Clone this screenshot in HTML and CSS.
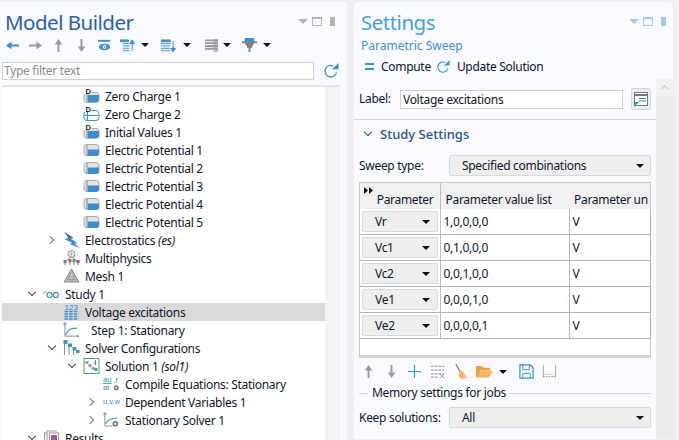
FILE: index.html
```html
<!DOCTYPE html>
<html>
  <head>
    <meta charset="UTF-8">
    <title>Model Builder</title>
    <link rel="stylesheet" href="styles.css">
  </head>
  <body>
    <svg class="defs" width="0" height="0">
      <symbol id="cyl" viewBox="0 0 16 16"><rect x=".5" y="2.5" width="15" height="11" rx="3" fill="#e4e4e4" stroke="#a8a8a8"/><path d="M4 7.500h11.500v3.500a3 3 0 0 1-3 3H4z" fill="#3a8ed0"/><path d="M3.500 3v11" stroke="#a8a8a8" stroke-width="1.500"/></symbol>
      <symbol id="cyl-d" viewBox="0 0 16 16"><rect x=".5" y="4.5" width="15" height="10" rx="3" fill="#e4e4e4" stroke="#a8a8a8"/><path d="M4 7h11.500v4a3 3 0 0 1-3 3H4z" fill="#3a8ed0"/><path d="M3.500 5v9" stroke="#a8a8a8" stroke-width="1.500"/><rect x="0" y="0" width="8" height="6" fill="#fff"/><text x="2" y="6" class="tiny">D</text></symbol>
      <symbol id="cyl-o" viewBox="0 0 16 16"><rect x=".5" y="4.5" width="15" height="10" rx="3" fill="#fff" stroke="#3a8ed0"/><path d="M1 9.500h14" stroke="#3a8ed0"/><path d="M4 5v9" stroke="#3a8ed0"/><rect x="0" y="0" width="8" height="6" fill="#fff"/><text x="2" y="6" class="tiny">D</text></symbol>
      <symbol id="bolt" viewBox="0 0 16 16"><path d="M1 0l9 6-3 .5 7 4.500-3 .5 5 4.500-10-4 2.500-1L1 7l4-1z" fill="#3a8ed0"/><path d="M1 0l9 6-3 .5-2-.5z" fill="#56697c"/></symbol>
      <symbol id="multi" viewBox="0 0 16 16"><circle cx="8" cy="4" r="3.500" fill="none" stroke="#9a9a9a"/><path d="M5 2l6 4M11 2L5 6M8 0v8" stroke="#9a9a9a" stroke-width=".6"/><path d="M2 12l5-5h2l5 5" fill="none" stroke="#888"/><rect x="0" y="10" width="3" height="3" fill="#3a8ed0"/><rect x="13" y="10" width="3" height="3" fill="#d6359c"/><rect x="5" y="9" width="3" height="3" fill="#e2542e"/><rect x="9" y="9" width="3" height="3" fill="#46a85a"/><path d="M1.500 13v2M6.500 12v3M10.500 12v3M14.500 13v2" stroke="#777"/></symbol>
      <symbol id="mesh" viewBox="0 0 16 16"><path d="M8 1l7.500 13H.5z" fill="#c4c4c4" stroke="#8c8c8c"/><path d="M5 8.500h6M3 11.500h10M8 1L4 14M8 1l4 13M5 8.500L8 14l3-5.500" stroke="#8c8c8c" stroke-width=".6" fill="none"/></symbol>
      <symbol id="study" viewBox="0 0 18 16"><path d="M0 8c1-3 3-3 4-1" fill="none" stroke="#2f9bb5"/><circle cx="7" cy="9" r="2.700" fill="none" stroke="#2f9bb5" stroke-width="1.200"/><circle cx="13.500" cy="9" r="2.700" fill="none" stroke="#4f7f96" stroke-width="1.200"/></symbol>
      <symbol id="sweep" viewBox="0 0 16 16"><text x="1" y="6" class="tiny blue mid">123</text><path d="M1 7.500h14M1 10h14M1 12.500h14M1 15h14" stroke="#3a8ed0" stroke-width="1.500" stroke-dasharray="3.600 1"/></symbol>
      <symbol id="step" viewBox="0 0 18 16"><path d="M2 0l1.500 2h-3zM2 1v13.500h15" fill="none" stroke="#8c8c8c"/><path d="M15 13l2 1.500-2 1.500" fill="#8c8c8c"/><path d="M3 13c2-6 6-7 12-7" fill="none" stroke="#2f9bb5" stroke-width="1.200"/></symbol>
      <symbol id="solver" viewBox="0 0 16 16"><path d="M1 2v13M5.500 6v9M10 10v5" stroke="#8c8c8c"/><rect x="0" y="0" width="4" height="4" fill="#2f9bb5"/><rect x="4.500" y="3.500" width="4" height="3.500" fill="#2f9bb5"/><rect x="9" y="7" width="4" height="3.500" fill="#2f9bb5"/><rect x="12.500" y="10" width="3.500" height="3" fill="#2f9bb5"/></symbol>
      <symbol id="solution" viewBox="0 0 16 16"><rect x=".5" y=".5" width="15" height="15" fill="#fff" stroke="#4fa556"/><rect x="2" y="3" width="3" height="3" fill="#9a9a9a"/><rect x="5" y="6" width="3" height="3" fill="#9a9a9a"/><rect x="8" y="9" width="3" height="3" fill="#9a9a9a"/><rect x="11" y="10" width="3" height="3" fill="#2f9bb5"/><path d="M12 2v5M10 5h3" stroke="#2f9bb5"/></symbol>
      <symbol id="compile" viewBox="0 0 18 16"><text x="0" y="6" class="tiny blue mid">au</text><path d="M0 7.500h9" stroke="#2f9bb5"/><text x="0" y="14" class="tiny blue mid">at</text><text x="11" y="7" class="tiny blue mid">.f</text><circle cx="14" cy="12" r="2.700" fill="#777"/><circle cx="14" cy="12" r="1" fill="#fff"/></symbol>
      <symbol id="depvar" viewBox="0 0 18 16"><text x="0" y="10" class="tiny blue mid">u,v,w</text></symbol>
      <symbol id="stat" viewBox="0 0 18 16"><path d="M2 0l1.500 2h-3zM2 1v13.500h8" fill="none" stroke="#8c8c8c"/><path d="M3 12c2-5 6-6 12-6" fill="none" stroke="#2f9bb5" stroke-width="1.200"/><circle cx="13" cy="12" r="3" fill="#777"/><circle cx="13" cy="12" r="1.200" fill="#fff"/></symbol>
      <symbol id="results" viewBox="0 0 16 16"><rect x="1" y="3" width="9" height="13" fill="#fff" stroke="#999"/><rect x="3.500" y="1" width="9" height="13" fill="#fff" stroke="#999"/><rect x="6" y="3" width="9" height="13" fill="#fff" stroke="#999"/><rect x="7.500" y="5" width="6" height="9" fill="#b04f9c"/></symbol>
      <symbol id="up" viewBox="0 0 16 16"><path d="M8 1l4 6H9v8H7V7H4z" fill="#9a9a9a"/></symbol>
      <symbol id="down" viewBox="0 0 16 16"><path d="M8 15l4-6H9V1H7v8H4z" fill="#9a9a9a"/></symbol>
      <symbol id="refresh" viewBox="0 0 16 16"><path d="M13.500 9.500A5.800 5.800 0 1 1 10.500 3" fill="none" stroke="#3a8ed0" stroke-width="1.300"/><path d="M9 6.500l6.500-.5V0z" fill="#3a8ed0"/></symbol>
    </svg>

    <section class="panel builder">
      <header class="panel-head">
        <h1 class="panel-title dark">Model Builder</h1>
        <div class="view-btns grey">
          <span class="tri"></span><span class="box"></span><span class="pin"></span>
        </div>
      </header>
      <div class="toolbar">
        <svg class="tb" viewBox="0 0 16 16"><path d="M1 8l6-4v3h8v2H7v3z" fill="#3a8ed0"/></svg>
        <svg class="tb" viewBox="0 0 16 16"><path d="M15 8L9 4v3H1v2h8v3z" fill="#9a9a9a"/></svg>
        <svg class="tb"><use href="#up"/></svg>
        <svg class="tb"><use href="#down"/></svg>
        <svg class="tb" viewBox="0 0 16 16"><path d="M1 2h13v2H1z" fill="#3a8ed0"/><ellipse cx="8" cy="9.500" rx="6" ry="3.500" fill="#3a8ed0"/><circle cx="8" cy="9.500" r="2" fill="#fff"/><circle cx="8" cy="9.500" r="1" fill="#3a8ed0"/></svg>
        <svg class="tb list-up" viewBox="0 0 16 16"><path d="M0 2h9v2H0zM3 6h7M3 8.500h7M3 11h7M3 13.500h7" stroke="#3a8ed0" fill="#3a8ed0"/><path d="M13 14V4M10.500 6L13 2l2.500 4z" stroke="#3a8ed0" fill="#3a8ed0"/></svg><span class="drop"></span>
        <svg class="tb list-down" viewBox="0 0 16 16"><path d="M0 2h10v2H0zM0 6h10M0 8.500h10M0 11h10M0 13.500h10" stroke="#3a8ed0" fill="#3a8ed0"/><path d="M13 3v10M10.500 11l2.500 4 2.500-4z" stroke="#3a8ed0" fill="#3a8ed0"/></svg><span class="drop"></span>
        <svg class="tb grid" viewBox="0 0 16 16"><path d="M1 2.500h14M1 5.500h14M1 8.500h14M1 11.500h14" stroke="#9a9a9a" stroke-width="2"/><path d="M10 1h5v14h-5z" fill="#9a9a9a" opacity=".6"/></svg><span class="drop"></span>
        <svg class="tb funnel" viewBox="0 0 16 16"><path d="M0 4.500h16" stroke="#808080" stroke-width="2"/><path d="M3 0h10v4H3z" fill="#3a8ed0"/><path d="M3 5h10l-3 6H6z" fill="#808080"/><path d="M7 11h2v4H7z" fill="#3a8ed0"/></svg><span class="drop"></span>
      </div>
      <div class="filter-row">
        <input class="filter" type="text" placeholder="Type filter text">
        <svg class="refresh"><use href="#refresh"/></svg>
      </div>
      <div class="tree-box">
        <ul class="tree">
          <li class="node d3"><i class="chev"></i><svg class="ico"><use href="#cyl-d"/></svg><span>Zero Charge 1</span></li>
          <li class="node d3"><i class="chev"></i><svg class="ico"><use href="#cyl-o"/></svg><span>Zero Charge 2</span></li>
          <li class="node d3"><i class="chev"></i><svg class="ico"><use href="#cyl-d"/></svg><span>Initial Values 1</span></li>
          <li class="node d3"><i class="chev"></i><svg class="ico"><use href="#cyl"/></svg><span>Electric Potential 1</span></li>
          <li class="node d3"><i class="chev"></i><svg class="ico"><use href="#cyl"/></svg><span>Electric Potential 2</span></li>
          <li class="node d3"><i class="chev"></i><svg class="ico"><use href="#cyl"/></svg><span>Electric Potential 3</span></li>
          <li class="node d3"><i class="chev"></i><svg class="ico"><use href="#cyl"/></svg><span>Electric Potential 4</span></li>
          <li class="node d3"><i class="chev"></i><svg class="ico"><use href="#cyl"/></svg><span>Electric Potential 5</span></li>
          <li class="node d2"><i class="chev closed"></i><svg class="ico"><use href="#bolt"/></svg><span>Electrostatics <em>(es)</em></span></li>
          <li class="node d2"><i class="chev"></i><svg class="ico"><use href="#multi"/></svg><span>Multiphysics</span></li>
          <li class="node d2"><i class="chev"></i><svg class="ico"><use href="#mesh"/></svg><span>Mesh 1</span></li>
          <li class="node d1"><i class="chev open"></i><svg class="ico"><use href="#study"/></svg><span>Study 1</span></li>
          <li class="node d2 selected"><i class="chev"></i><svg class="ico"><use href="#sweep"/></svg><span>Voltage excitations</span></li>
          <li class="node d2"><i class="chev"></i><svg class="ico"><use href="#step"/></svg><span class="shifted">Step 1: Stationary</span></li>
          <li class="node d2"><i class="chev open"></i><svg class="ico"><use href="#solver"/></svg><span>Solver Configurations</span></li>
          <li class="node d3"><i class="chev open"></i><svg class="ico"><use href="#solution"/></svg><span>Solution 1 <em>(sol1)</em></span></li>
          <li class="node d4"><i class="chev"></i><svg class="ico"><use href="#compile"/></svg><span>Compile Equations: Stationary</span></li>
          <li class="node d4"><i class="chev closed"></i><svg class="ico"><use href="#depvar"/></svg><span>Dependent Variables 1</span></li>
          <li class="node d4"><i class="chev closed"></i><svg class="ico"><use href="#stat"/></svg><span>Stationary Solver 1</span></li>
          <li class="node d1"><i class="chev open"></i><svg class="ico"><use href="#results"/></svg><span>Results</span></li>
        </ul>
        <div class="tree-scroll"></div>
      </div>
    </section>

    <section class="panel settings">
      <header class="panel-head">
        <h1 class="panel-title">Settings</h1>
        <div class="view-btns">
          <span class="tri"></span><span class="box"></span><span class="pin"></span>
        </div>
      </header>
      <div class="subtitle">Parametric Sweep</div>
      <div class="actions">
        <span class="action"><span class="equals"></span>Compute</span>
        <span class="action"><svg class="action-ico"><use href="#refresh"/></svg>Update Solution</span>
      </div>
      <div class="settings-body">
        <div class="form">
          <div class="label-row">
            <label class="label-name" for="label">Label:</label>
            <input id="label" class="label-input" type="text" value="Voltage excitations">
            <button class="note-btn" type="button">
              <svg viewBox="0 0 16 16" width="16" height="16"><rect x="1.500" y="1.500" width="13" height="13" fill="#fff" stroke="#777"/><path d="M1 4h14" stroke="#777" stroke-width="2"/><path d="M6 7.500h7M6 10h7" stroke="#23a27f"/><path d="M1 16v-5h5z" fill="#23a27f"/></svg>
            </button>
          </div>
          <h2 class="section-head"><i class="chev open navy"></i>Study Settings</h2>
          <div class="field">
            <span class="field-name">Sweep type:</span>
            <div class="select">Specified combinations<span class="drop"></span></div>
          </div>
          <div class="table-wrap">
            <table class="params">
              <thead>
                <tr>
                  <th class="c-param">
                    <svg class="ff" viewBox="0 0 9 7"><path d="M0 0l4 3.500L0 7zM5 0l4 3.500L5 7z" fill="#111"/></svg>Parameter
                  </th>
                  <th class="c-list">Parameter value list</th>
                  <th class="c-unit">Parameter un</th>
                </tr>
              </thead>
              <tbody>
                <tr><td class="c-param"><div class="combo">Vr<span class="drop"></span></div></td><td>1,0,0,0,0</td><td>V</td></tr>
                <tr><td class="c-param"><div class="combo">Vc1<span class="drop"></span></div></td><td>0,1,0,0,0</td><td>V</td></tr>
                <tr><td class="c-param"><div class="combo">Vc2<span class="drop"></span></div></td><td>0,0,1,0,0</td><td>V</td></tr>
                <tr><td class="c-param"><div class="combo">Ve1<span class="drop"></span></div></td><td>0,0,0,1,0</td><td>V</td></tr>
                <tr><td class="c-param"><div class="combo">Ve2<span class="drop"></span></div></td><td>0,0,0,0,1</td><td>V</td></tr>
              </tbody>
            </table>
          </div>
          <div class="table-tools">
            <svg class="tt"><use href="#up"/></svg>
            <svg class="tt"><use href="#down"/></svg>
            <svg class="tt" viewBox="0 0 16 16"><path d="M8 1v14M1 8h14" stroke="#3a8ed0" stroke-width="1.200"/></svg>
            <svg class="tt" viewBox="0 0 16 16"><path d="M1 2.500h14M1 6.500h14M1 10.500h14M1 14h8" stroke="#a0a0a0" stroke-width="1.500" stroke-dasharray="3 1"/><path d="M11 11l4 4M15 11l-4 4" stroke="#8c8c8c"/></svg>
            <svg class="tt" viewBox="0 0 16 16"><path d="M3 0l5 9" stroke="#777" stroke-width="1.200"/><path d="M7 8l3-1 5 8-6 1-3-3z" fill="#f0b56b"/></svg>
            <svg class="tt folder" viewBox="0 0 18 16"><path d="M0 2h6l2 2h7v3H5l-3 7H0z" fill="#eda23e"/><path d="M5 7.500h13l-4 7H1.500z" fill="#f3b562"/></svg><span class="drop"></span>
            <svg class="tt save" viewBox="0 0 16 16"><path d="M1 1h11l3 3v11H1z" fill="none" stroke="#3a8ed0" stroke-width="1.300"/><path d="M4 1v5h7V1M4 15v-5h8v5" fill="none" stroke="#3a8ed0"/></svg>
            <svg class="tt" viewBox="0 0 16 16"><path d="M1.500 1v12M14.500 1v12" stroke="#a8a8a8"/><path d="M1 13.500h14" stroke="#8c8c8c" stroke-dasharray="2 1"/><path d="M3 11h10" stroke="#b8b8b8" stroke-dasharray="2 1"/></svg>
          </div>
          <div class="legend"><span>Memory settings for jobs</span></div>
          <div class="field keep">
            <span class="field-name">Keep solutions:</span>
            <div class="select">All<span class="drop"></span></div>
          </div>
        </div>
        <div class="scrollbar"><span class="scroll-up"></span></div>
      </div>
    </section>
  </body>
</html>
```

FILE: styles.css
```css
html {
  font-family: "Noto Sans", "Open Sans", Arial, sans-serif;
  font-size: 12px;
  letter-spacing: -0.3px;
  color: #10162a;
}
body {
  margin: 0;
  padding: 2px 6px 0 0;
  height: 438px;
  overflow: hidden;
  display: flex;
  gap: 7px;
  background: #efefef;
}
.defs {
  display: none;
}
.tiny {
  font-family: "Liberation Sans", Arial, sans-serif;
  font-size: 7.500px;
  font-weight: bold;
  letter-spacing: 0;
  fill: #222;
}
.tiny.blue {
  font-weight: normal;
  fill: #2f8fb5;
}
.tiny.mid {
  font-size: 8px;
}

/* panels */
.panel {
  background: #f9faff;
  display: flex;
  flex-direction: column;
}
.builder {
  width: 347px;
  flex: none;
}
.settings {
  width: 319px;
  height: 437px;
  flex: none;
  border-radius: 5px 5px 0 0;
}
.panel-head {
  height: 30px;
  display: flex;
  align-items: flex-end;
  justify-content: space-between;
  padding-left: 5px;
}
.settings .panel-head {
  padding-left: 7px;
}
.panel-title {
  margin: 0 0 -5px;
  font-size: 20.5px;
  font-weight: normal;
  letter-spacing: -0.5px;
  line-height: 30px;
  color: #4a9fe0;
}
.panel-title.dark {
  color: #2a5fa8;
}
.view-btns {
  display: flex;
  align-items: center;
  gap: 4px;
  padding: 0 7px 6px 0;
}
.builder .view-btns {
  padding-right: 12px;
}
.tri {
  border: 5px solid transparent;
  border-top: 5px solid #9dc9ee;
  border-bottom: 0;
}
.box {
  width: 8px;
  height: 6px;
  border: 1px solid #9dc9ee;
  border-top-width: 2px;
}
.pin {
  width: 5px;
  height: 9px;
  margin-left: 4px;
  background: #9dc9ee;
}
.grey .tri {
  border-top-color: #b4b4b4;
}
.grey .box {
  border-color: #b4b4b4;
}
.grey .pin {
  background: #b4b4b4;
}

/* model builder toolbar */
.toolbar {
  height: 26px;
  padding-left: 5px;
  display: flex;
  align-items: center;
}
.tb {
  width: 15px;
  height: 15px;
  flex: none;
  margin-right: 8px;
}
.tb.list-up {
  margin-right: 6px;
}
.tb.list-down {
  margin-left: 12px;
  margin-right: 7px;
}
.tb.grid {
  margin-left: 13px;
  margin-right: 4px;
}
.tb.funnel {
  margin-left: 11px;
  margin-right: 6px;
}
.drop {
  display: inline-block;
  width: 0;
  height: 0;
  flex: none;
  border: 4px solid transparent;
  border-top: 4px solid #111;
  border-bottom: 0;
}
.filter-row {
  display: flex;
  align-items: center;
  gap: 9px;
  padding: 0 0 0 2px;
  height: 25px;
  box-sizing: border-box;
}
.filter {
  width: 312px;
  height: 18px;
  box-sizing: border-box;
  border: 1px solid #cfcfcf;
  background: #fff;
  padding: 0 1px;
  font: inherit;
  letter-spacing: inherit;
}
.filter::placeholder {
  color: #8a8a8a;
  opacity: 1;
}
.refresh {
  width: 16px;
  height: 16px;
}

/* tree */
.tree-box {
  flex: 1;
  min-height: 0;
  margin: 2px 7px 0 2px;
  display: flex;
  background: #fff;
  border-top: 2px solid #e4e4e4;
  overflow: hidden;
}
.tree {
  list-style: none;
  margin: 0;
  padding: 0;
  flex: 1;
}
.node {
  height: 18px;
  display: flex;
  align-items: center;
  white-space: nowrap;
}
.d1 { padding-left: 24px; }
.d2 { padding-left: 44px; }
.d3 { padding-left: 64px; }
.d4 { padding-left: 84px; }
.node.selected {
  background: #d9d9d9;
}
.chev {
  width: 14px;
  height: 14px;
  flex: none;
  position: relative;
}
.chev.open::before,
.chev.closed::before {
  content: "";
  position: absolute;
  width: 5px;
  height: 5px;
  border-right: 1.3px solid #444;
  border-bottom: 1.3px solid #444;
}
.chev.open::before {
  left: 3px;
  top: 2px;
  transform: rotate(45deg);
}
.chev.closed::before {
  left: 1px;
  top: 4px;
  border-color: #777;
  transform: rotate(-45deg);
}
.ico {
  width: 17px;
  height: 16px;
  flex: none;
  margin: 0 5px 0 3px;
}
.shifted {
  margin-left: 6px;
}
em {
  font-style: italic;
}
.tree-scroll {
  width: 15px;
  flex: none;
  background: #f2f2f2;
}

/* settings */
.subtitle {
  padding: 5px 0 0 7px;
  line-height: 17px;
  letter-spacing: 0;
  color: #3d8fd6;
}
.actions {
  display: flex;
  gap: 5px;
  padding-left: 11px;
  height: 25px;
  align-items: center;
}
.action {
  display: flex;
  align-items: center;
  gap: 7px;
}
.equals {
  width: 9px;
  height: 3px;
  border-top: 2px solid #2f9bb5;
  border-bottom: 2px solid #2f9bb5;
}
.action-ico {
  width: 14px;
  height: 14px;
}
.settings-body {
  flex: 1;
  min-height: 0;
  display: flex;
}
.form {
  flex: 1;
  min-width: 0;
  display: flex;
  flex-direction: column;
}
.label-row {
  height: 41px;
  flex: none;
  padding: 9px 5px 0 5px;
  box-sizing: border-box;
  display: flex;
  align-items: flex-start;
  border-bottom: 1px solid #d6d6d6;
}
.label-name {
  width: 41px;
  line-height: 22px;
}
.label-input {
  width: 223px;
  height: 19px;
  margin-top: 2px;
  box-sizing: border-box;
  border: 1px solid #cfcfcf;
  background: #fff;
  padding: 0 2px;
  font: inherit;
  letter-spacing: inherit;
  color: inherit;
}
.note-btn {
  width: 20px;
  height: 22px;
  margin-left: 8px;
  padding: 0;
  border: 1px solid #d6d6d6;
  border-radius: 2px;
  background: #ececec;
  display: flex;
  align-items: center;
  justify-content: center;
}
.section-head {
  margin: 0;
  height: 28px;
  flex: none;
  padding-left: 8px;
  display: flex;
  align-items: center;
  gap: 4px;
  font-size: 13px;
  font-weight: 500;
  letter-spacing: 0;
  color: #2b4f8f;
}
.chev.navy::before {
  border-color: #2b4f8f;
}
.field {
  display: flex;
  align-items: center;
  padding: 0 5px;
  height: 21px;
  flex: none;
  margin-top: 7px;
}
.field-name {
  width: 90px;
  flex: none;
}
.select {
  width: 202px;
  height: 21px;
  box-sizing: border-box;
  border: 1px solid #d9d9d9;
  border-radius: 2px;
  background: #eeeeee;
  padding: 0 6px 0 12px;
  display: flex;
  align-items: center;
  justify-content: space-between;
}

/* parameter table */
.table-wrap {
  margin: 6px 5px 0;
  width: 292px;
  height: 176px;
  flex: none;
  box-sizing: border-box;
  background: #fff;
  border: 1px solid #c8c8c8;
  border-bottom: 3px solid #d4d4d4;
}
.params {
  border-collapse: collapse;
  table-layout: fixed;
  width: 290px;
}
.params th {
  box-sizing: border-box;
  height: 26px;
  padding: 0 0 0 5px;
  background: #f0f0f0;
  font-weight: normal;
  text-align: left;
  vertical-align: bottom;
  line-height: 19px;
  white-space: nowrap;
  overflow: hidden;
}
.params th.c-param {
  position: relative;
  text-align: right;
  padding: 0 6px 0 0;
  border-right: 1px solid #bdbdbd;
}
.c-param { width: 80px; }
.c-list { width: 129px; }
.c-unit { width: 81px; }
.ff {
  position: absolute;
  left: 4px;
  top: 4px;
  width: 9px;
  height: 7px;
}
.params td {
  height: 25px;
  padding: 0 0 0 3px;
  border-right: 1px solid #b4b4b4;
  border-bottom: 1px solid #b4b4b4;
}
.params td.c-param {
  padding: 0 2px;
  border-right: 1px solid #bdbdbd;
}
.combo {
  height: 21px;
  box-sizing: border-box;
  border: 1px solid #d9d9d9;
  border-radius: 2px;
  background: #eeeeee;
  padding: 0 7px 0 12px;
  display: flex;
  align-items: center;
  justify-content: space-between;
}
.table-tools {
  height: 27px;
  flex: none;
  padding-left: 7px;
  display: flex;
  align-items: center;
  gap: 8px;
}
.tt {
  width: 15px;
  height: 15px;
  flex: none;
}
.tt.folder {
  width: 17px;
}
.table-tools .drop {
  margin-left: -2px;
}
.tt.save {
  margin-left: 4px;
}
.legend {
  margin: 0 5px;
  height: 16px;
  flex: none;
  display: flex;
  align-items: center;
  line-height: 16px;
}
.legend::before {
  content: "";
  width: 9px;
  border-top: 1px solid #d6d6d6;
}
.legend::after {
  content: "";
  flex: 1;
  border-top: 1px solid #d6d6d6;
}
.legend span {
  padding: 0 3px 0 4px;
}
.field.keep {
  margin-top: 6px;
}
.scrollbar {
  width: 17px;
  flex: none;
  background: #e9e9e9;
}
.scroll-up {
  display: block;
  height: 17px;
  background: #f1f1f1;
  position: relative;
}
.scroll-up::before {
  content: "";
  position: absolute;
  left: 6px;
  top: 7px;
  width: 4px;
  height: 4px;
  border-left: 1px solid #c4c4c4;
  border-top: 1px solid #c4c4c4;
  transform: rotate(45deg);
}
```
